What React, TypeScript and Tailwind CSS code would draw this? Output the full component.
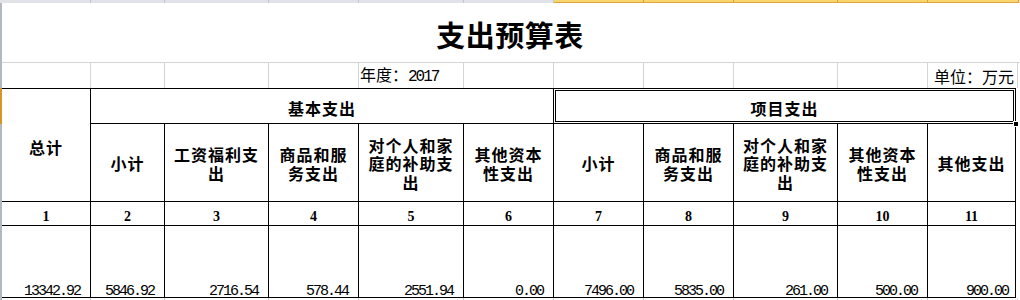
import React from "react";

const cjk = "font-['Noto_Sans_CJK_SC',sans-serif]";

const topGray = [91, 74, 104, 90, 105, 90];
const topYellow = [90, 90, 104, 90, 91];
const row2Widths = [89, 74, 104, 90, 105, 90, 90, 90, 104, 90, 90];

const subHeads: React.ReactNode[] = [
  <>小计</>,
  <>工资福利支<br />出</>,
  <>商品和服<br />务支出</>,
  <>对个人和家<br />庭的补助支<br />出</>,
  <>其他资本<br />性支出</>,
  <>小计</>,
  <>商品和服<br />务支出</>,
  <>对个人和家<br />庭的补助支<br />出</>,
  <>其他资本<br />性支出</>,
  <>其他支出</>,
];

const values = [
  "13342.92",
  "5846.92",
  "2716.54",
  "578.44",
  "2551.94",
  "0.00",
  "7496.00",
  "5835.00",
  "261.00",
  "500.00",
  "900.00",
];

const belowWidths = [89, 74, 104, 90, 105, 90, 90, 90, 104, 90, 90];

export default function App() {
  return (
    <div className={`w-[1020px] h-[300px] bg-white overflow-hidden flex flex-col text-black ${cjk}`}>
      {/* column header strip (clipped) */}
      <div className="flex h-[3px] shrink-0">
        {topGray.map((w, i) => (
          <div key={"g" + i} style={{ width: w }} className="h-full bg-[#dfe2e7] border-r border-[#c3c6cc] shrink-0" />
        ))}
        {topYellow.map((w, i) => (
          <div key={"y" + i} style={{ width: w }} className="h-full bg-[#f9d56f] border-r border-b border-[#e0a43a] shrink-0" />
        ))}
        <div className="flex-1 bg-[#dfe2e7]" />
      </div>

      <div className="flex flex-1 min-h-0">
        {/* row header strip (clipped) */}
        <div className="w-[2px] shrink-0 flex flex-col">
          <div className="h-[85px] bg-[#b3b7be]" />
          <div className="h-[36px] bg-[#d6952c]" />
          <div className="flex-1 bg-[#b3b7be]" />
        </div>

        <div className="w-[1018px] flex flex-col">
          {/* title row */}
          <div className="h-[60px] shrink-0 border-b border-[#d4d4d4] flex items-center justify-center pt-[3px] pr-[2px]">
            <span className="text-[29px] font-bold leading-none tracking-[0.5px]">支出预算表</span>
          </div>

          {/* year / unit row */}
          <div className="h-[25px] shrink-0 flex">
            {row2Widths.map((w, i) => (
              <div
                key={i}
                style={{ width: w }}
                className={`h-full shrink-0 border-r border-[#d4d4d4] flex items-center whitespace-nowrap text-[16px] leading-none ${
                  i === 10 ? "justify-end pr-[3px]" : "pl-[1px]"
                }`}
              >
                {i === 4 && (
                  <span>
                    年度：<span className="font-['Liberation_Mono',monospace] text-[16px] tracking-[-2px]">2017</span>
                  </span>
                )}
                {i === 10 && <span>单位：万元</span>}
              </div>
            ))}
          </div>

          {/* main table */}
          <div className="w-[1014px] grid grid-cols-[88px_73px_103px_89px_104px_89px_89px_89px_103px_89px_87px] grid-rows-[34px_77px_23px_71px] gap-px bg-black border-t border-r border-b border-black shrink-0">
            <div className="row-span-2 bg-white flex items-center justify-center pt-[4px] text-[16px] font-bold tracking-[1px]">
              总计
            </div>
            <div className="col-span-5 bg-white flex items-center justify-center pt-[3px] text-[16px] font-bold tracking-[1px]">
              基本支出
            </div>
            <div className="col-span-5 bg-white relative flex items-center justify-center pt-[3px] text-[16px] font-bold tracking-[1px]">
              项目支出
              <div className="absolute inset-[1px] border border-black pointer-events-none" />
              <div className="absolute right-[-4px] bottom-[-4px] w-[6px] h-[6px] bg-black border border-white z-10" />
            </div>

            {subHeads.map((h, i) => (
              <div
                key={"s" + i}
                className="bg-white flex items-center justify-center text-center pt-[2px] text-[16px] font-bold leading-[18.5px] tracking-[1px]"
              >
                <span>{h}</span>
              </div>
            ))}

            {values.map((_, i) => (
              <div
                key={"n" + i}
                className="bg-white flex items-end justify-center font-['Liberation_Serif',serif] font-bold text-[14px] leading-[16px]"
              >
                {i + 1}
              </div>
            ))}

            {values.map((v, i) => (
              <div
                key={"v" + i}
                className={`bg-white flex items-end justify-end font-['Liberation_Mono',monospace] text-[15px] leading-[10px] tracking-[-2px] ${
                  i === 10 ? "pr-[7px]" : "pr-[10px]"
                }`}
              >
                {v}
              </div>
            ))}
          </div>

          {/* gridlines below */}
          <div className="flex flex-1">
            {belowWidths.map((w, i) => (
              <div key={i} style={{ width: w }} className="h-full shrink-0 border-r border-[#d4d4d4]" />
            ))}
          </div>
        </div>
      </div>
    </div>
  );
}
